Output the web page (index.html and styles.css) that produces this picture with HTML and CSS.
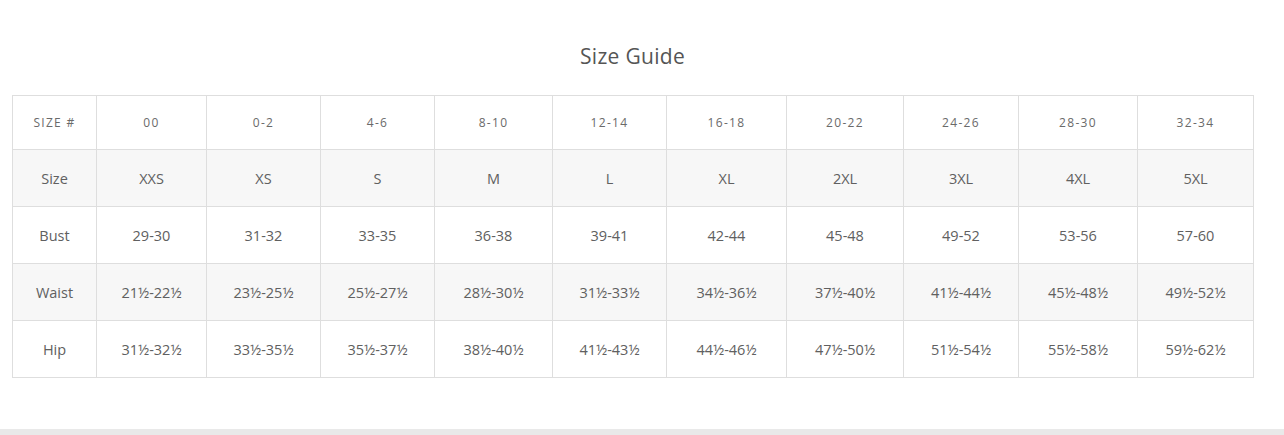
FILE: index.html
```html
<!DOCTYPE html>
<html>
<head>
<meta charset="utf-8">
<link rel="stylesheet" href="styles.css">
</head>
<body>
<div class="page">
  <section class="guide">
    <h2 class="title">Size Guide</h2>
    <table class="chart">
      <colgroup>
        <col class="c84"><col class="c110"><col class="c114"><col class="c114"><col class="c118"><col class="c114"><col class="c120"><col class="c117"><col class="c115"><col class="c119"><col class="c116">
      </colgroup>
      <tr class="head">
        <td>SIZE #</td><td>00</td><td>0-2</td><td>4-6</td><td>8-10</td><td>12-14</td><td>16-18</td><td>20-22</td><td>24-26</td><td>28-30</td><td>32-34</td>
      </tr>
      <tr class="alt">
        <td>Size</td><td>XXS</td><td>XS</td><td>S</td><td>M</td><td>L</td><td>XL</td><td>2XL</td><td>3XL</td><td>4XL</td><td>5XL</td>
      </tr>
      <tr>
        <td>Bust</td><td>29-30</td><td>31-32</td><td>33-35</td><td>36-38</td><td>39-41</td><td>42-44</td><td>45-48</td><td>49-52</td><td>53-56</td><td>57-60</td>
      </tr>
      <tr class="alt">
        <td>Waist</td><td>21½-22½</td><td>23½-25½</td><td>25½-27½</td><td>28½-30½</td><td>31½-33½</td><td>34½-36½</td><td>37½-40½</td><td>41½-44½</td><td>45½-48½</td><td>49½-52½</td>
      </tr>
      <tr>
        <td>Hip</td><td>31½-32½</td><td>33½-35½</td><td>35½-37½</td><td>38½-40½</td><td>41½-43½</td><td>44½-46½</td><td>47½-50½</td><td>51½-54½</td><td>55½-58½</td><td>59½-62½</td>
      </tr>
    </table>
  </section>
  <div class="footer-bar"></div>
</div>
</body>
</html>
```

FILE: styles.css
```css
html, body {
  margin: 0;
  padding: 0;
  background: #ffffff;
}
body {
  font-family: "Open Sans", "Noto Sans", sans-serif;
  color: #555555;
}
.page {
  width: 1284px;
  height: 435px;
  display: flex;
  flex-direction: column;
  overflow: hidden;
}
.guide {
  width: 1241px;
  margin-left: 12px;
  padding-top: 43px;
  flex: 1;
}
.title {
  margin: 0 0 26px 0;
  text-align: center;
  font-weight: 400;
  font-size: 21px;
  line-height: 26px;
  color: #555555;
  letter-spacing: 0.3px;
}
.chart {
  width: 1241px;
  table-layout: fixed;
  border-collapse: collapse;
  border: 1px solid #dcdcdc;
}
.chart td {
  border: 1px solid #dedede;
  text-align: center;
  vertical-align: middle;
  font-size: 14.5px;
  color: #606060;
  height: 56px;
  padding: 0;
}
.chart .head td {
  height: 53px;
  font-size: 12px;
  letter-spacing: 1.3px;
  color: #6a6a6a;
}
.chart .alt td {
  background: #f7f7f7;
}
.c84 { width: 84px; }
.c110 { width: 110px; }
.c114 { width: 114px; }
.c115 { width: 115px; }
.c116 { width: 116px; }
.c117 { width: 117px; }
.c118 { width: 118px; }
.c119 { width: 119px; }
.c120 { width: 120px; }
.footer-bar {
  height: 6px;
  background: #e9e9e9;
  flex: none;
}
```
